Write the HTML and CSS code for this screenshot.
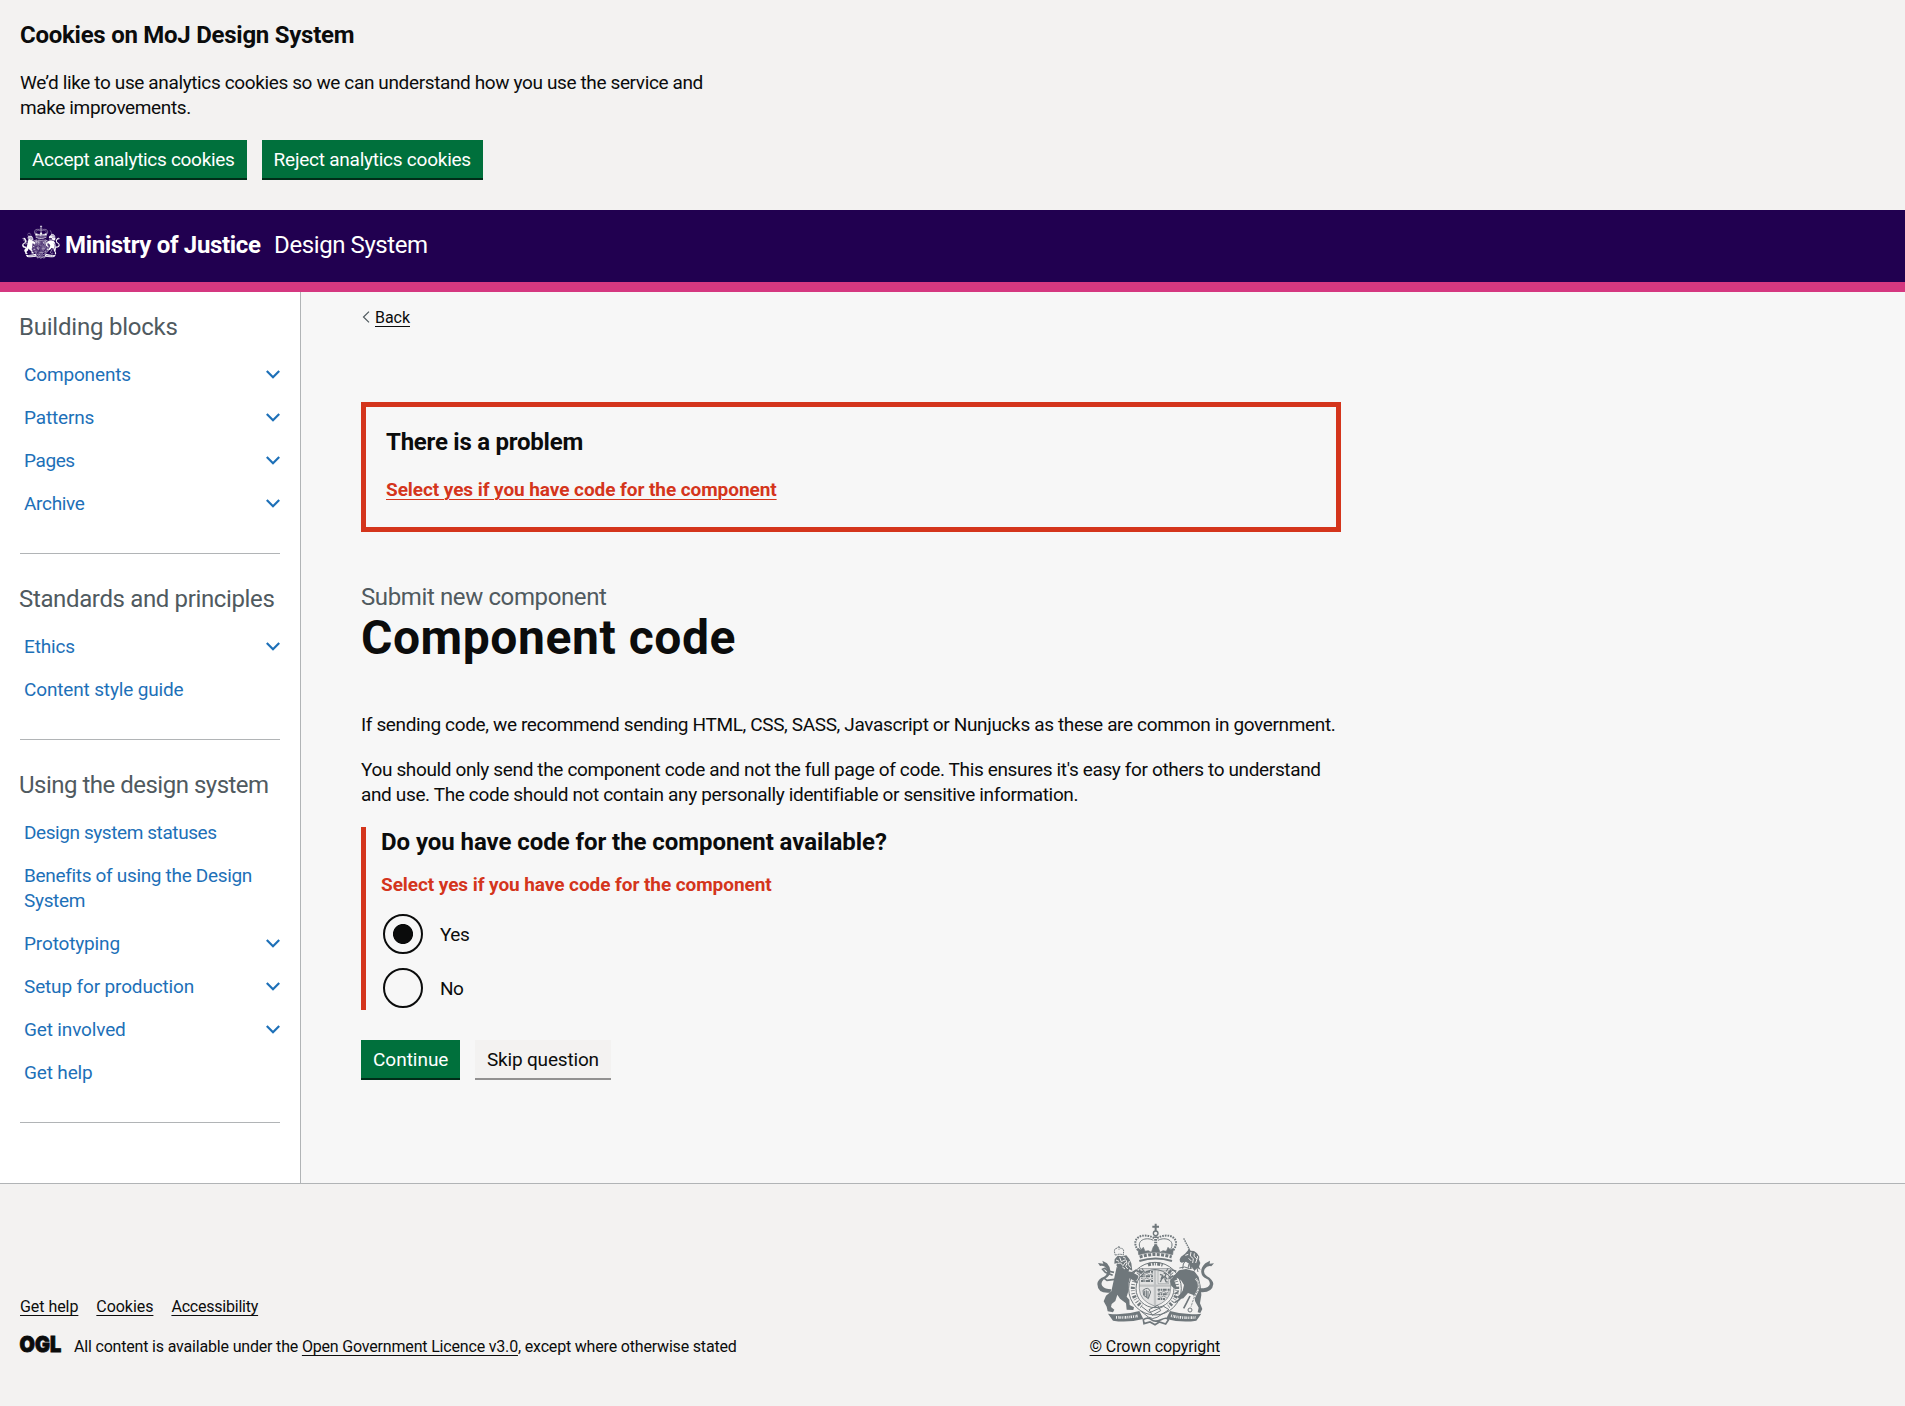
FILE: index.html
```html
<!DOCTYPE html>
<html lang="en">
<head>
<meta charset="utf-8">
<title>Component code - MoJ Design System</title>
<link rel="stylesheet" href="styles.css">
</head>
<body>
<svg class="sprite" aria-hidden="true">
  <symbol id="chevron" viewBox="0 0 14 9"><path d="M.8 1 7 7.2 13.2 1" fill="none" stroke="currentColor" stroke-width="2.2"/></symbol>
  <symbol id="crest" viewBox="51 40 351 309">
    <g fill="none" stroke="currentColor" stroke-width="3">
      <!-- crown -->
      <path d="M227 42v22M217 51h20" stroke-width="6"/>
      <circle cx="227" cy="71" r="7" stroke-width="4"/>
      <path d="M174 122C148 84 190 66 224 86M280 122C306 84 264 66 230 86" stroke-width="6" stroke-dasharray="5 3"/>
      <path d="M183 120C165 92 199 80 220 92M271 120C289 92 255 80 234 92"/>
      <path d="M227 80v30" stroke-width="9" stroke-dasharray="5 3"/>
      <path d="M176 135l-2-19 8 5 8-8 5 12 10-2 9 5 6-17 7-6 7 6 6 17 9-5 10 2 5-12 8 8 8-5-2 19q-51-14-102 0z" fill="currentColor" stroke-width="2"/>
      <path d="M179 142q48-15 96 0" stroke-width="9" stroke-dasharray="9 4"/>
      <path d="M178 154q49-15 98 0" stroke-width="6"/>
      <!-- garter -->
      <circle cx="225" cy="237" r="79"/>
      <circle cx="225" cy="237" r="57"/>
      <path d="M190 180A67 67 0 0 0 186 291M260 180A67 67 0 0 1 264 291" stroke-width="12" stroke-dasharray="3 5 7 4 2 6"/>
      <path d="M204 166q21-7 44 0" stroke-width="10" stroke-dasharray="9 4 5 3 3 4"/>
      <!-- shield -->
      <path d="M178 177h94v60q0 36-47 53q-47-17-47-53z" stroke-width="2" fill="currentColor" fill-opacity=".12"/>
      <path d="M225 178v110M178 228h94" stroke-width="7" stroke-opacity=".3"/>
      <path d="M183 186h36M183 200h36M183 214h36M233 240h36M233 254h32M233 268h22" stroke-width="6" stroke-dasharray="8 2 3 2 12 3"/>
      <path d="M183 192l9 3 8-4 9 5 10-4M183 206l9 3 8-4 9 5 10-4M234 246l9 3 8-4 9 5 7-4M234 260l9 3 8-4 9 5" stroke-width="2"/>
      <path d="M234 183h32v39h-32z" stroke-width="3" stroke-opacity=".4"/>
      <path d="M240 194l8 3-3 7 7-3 7 4M251 190l7 3-3 8 7 8M252 202l-7 6-4 9M254 206l4 10 5 1" stroke-width="4"/>
      <path d="M189 242q16-14 23 5l-7 20-14-10zM194 243v15M199 242v20M204 244v21" stroke-width="3"/>
      <!-- buckle -->
      <path d="M184 290l25 19 42-19 16 10-36 23q-13 8-26-1l-24-19M207 300l26-13 9 16-25 14z"/>
      <path d="M190 330q14-9 24 0t29 0 22 1l-8 12-19-6-13 8-15-8-18 5z" stroke-width="5"/>
      <!-- lion -->
      <path d="M106 137l-3-12q1-10 8-9 5-9 10 0 9-1 10 8l-1 12q-12-5-24 1M117 110v10" stroke-width="3" stroke-dasharray="5 2"/>
      <path d="M104 149l9-11 13 2 13-3 9 11 6 13 3 22-9-4-5 13-9-9-8 9-4-14-9-3-4-9 4-6-10 2z" fill="currentColor" stroke="none"/>
      <path d="M108 151l9 4M119 143l5 13 13-6M113 161l9-1 7 8 8-11M138 151l3 10-4 9 6 8M148 154l-3 11 7 9M127 172l8 6M129 142l8 4" class="knockout"/>
      <path d="M110 172l14 5 15 7 17 3 19 11-2 10-10 6-14-8-3 14-1 25-5 16 8 9 1 16 13 7-2 8-20-1-2-19-18-14-8-12-6 19-11 9-2 9 10 8-4 8-16-3-3-14-9-16 7-17 16-13 4-18z" fill="currentColor" stroke="none"/>
      <path d="M98 197L76 188l-8-9 7-3 9 8 18 4M104 209l-23 3-11-8M155 190l13-8 9 5M163 213l9 6" stroke-width="5"/>
      <path d="M91 249q-38 4-39-26 1-15 20-22 13-7 8-23-7-12-20-9l-6-9 16 2-3-9 14 8q16 18 7 35-4 8-18 14-9 10-3 19 8 10 27 10z" fill="currentColor" stroke="none"/>
      <!-- unicorn -->
      <path d="M311 86l17 33" stroke-width="4" stroke-dasharray="5 2"/>
      <path d="M299 149l4-8 12-9 8-9 4-8 5 8 10 1 9 7 7 10-1 9 4 10-4 11 5 10-10-6-9 9-7-13-5 8-4-17-9-6-13 3-5-3z" fill="currentColor" stroke="none"/>
      <path d="M316 137l9-3M333 127l-2 12 9 8-2 13M343 131l-1 9 9 8-4 12M326 146l8 8M352 139l1 8" class="knockout"/>
      <path d="M318 151l-8 12-2 14M327 163l-3 12M350 171l4 16M298 175l16-3 14 5 12-3" stroke-width="3"/>
      <path d="M284 196l13-14 21-4 25 7 13 17 6 27 2 27-4 25 7 17-6 12-8-2 3-14-10-18-6-20-16-6-14 16-12 3-6-8 9-8 7-10 4-17-9-14-13-8-8 7 8 21-2 8-14-11-4-15z" fill="currentColor" stroke="none"/>
      <path d="M313 249l-15 21-14 9M330 259l-10 20-9 17M280 198l-14 9M289 185l-15-5M296 245l-12 8" stroke-width="5"/>
      <path d="M358 247q39 4 42-24-2-14-19-23-13-8-7-22 8-11 20-8l8-9-13 1 1-9-14 8q-18 17-10 35 4 8 19 14 8 11 2 18-7 9-29 8z" fill="currentColor" stroke="none"/>
      <path d="M347 207q14 14 7 34-13 22-21 51" stroke-width="5" class="knockout"/>
      <path d="M347 207q14 14 7 34-13 22-21 51" stroke-dasharray="7 3" stroke-width="2.5"/>
      <circle cx="330" cy="301" r="6"/>
      <!-- ribbons -->
      <path d="M84 312q47 6 94-8l12 24q-48 12-91 5z" fill="currentColor" stroke="none"/>
      <path d="M364 312q-47 6-94-8l-12 24q48 12 91 5z" fill="currentColor" stroke="none"/>
      <path d="M108 323q35 2 67-5M273 318q34 9 75 5" class="knockout" stroke-width="8" stroke-dasharray="3 3 2 2 4 3"/>
    </g>
  </symbol>
</svg>

<section class="cookie-banner" aria-label="Cookies on MoJ Design System">
  <h2 class="heading-m cookie-banner__title">Cookies on MoJ Design System</h2>
  <p class="cookie-banner__text">We’d like to use analytics cookies so we can understand how you use the service and make improvements.</p>
  <div class="button-group">
    <button class="button button--accept" type="button">Accept analytics cookies</button>
    <button class="button button--reject" type="button">Reject analytics cookies</button>
  </div>
</section>

<header class="header">
  <svg class="header__crest" aria-hidden="true"><use href="#crest"/></svg>
  <span class="header__org">Ministry of Justice</span>
  <span class="header__service">Design System</span>
</header>

<div class="layout">
  <nav class="sidebar">
    <section class="nav-section">
      <h2 class="nav-section__title nav-section__title--loose">Building blocks</h2>
      <ul class="nav-list">
        <li><a class="loose" href="#">Components</a><svg><use href="#chevron"/></svg></li>
        <li><a class="loose" href="#">Patterns</a><svg><use href="#chevron"/></svg></li>
        <li><a class="tight" href="#">Pages</a><svg><use href="#chevron"/></svg></li>
        <li><a href="#">Archive</a><svg><use href="#chevron"/></svg></li>
      </ul>
    </section>
    <section class="nav-section">
      <h2 class="nav-section__title">Standards and principles</h2>
      <ul class="nav-list">
        <li><a class="loose" href="#">Ethics</a><svg><use href="#chevron"/></svg></li>
        <li><a class="loose" href="#">Content style guide</a></li>
      </ul>
    </section>
    <section class="nav-section">
      <h2 class="nav-section__title nav-section__title--tight">Using the design system</h2>
      <ul class="nav-list">
        <li><a class="tight" href="#">Design system statuses</a></li>
        <li><a href="#">Benefits of using the Design System</a></li>
        <li><a class="loose" href="#">Prototyping</a><svg><use href="#chevron"/></svg></li>
        <li><a class="loose" href="#">Setup for production</a><svg><use href="#chevron"/></svg></li>
        <li><a class="loose" href="#">Get involved</a><svg><use href="#chevron"/></svg></li>
        <li><a class="loose" href="#">Get help</a></li>
      </ul>
    </section>
  </nav>

  <main class="main">
    <a class="back-link" href="#"><svg viewBox="0 0 8 12"><path d="M7 .6 1.5 6 7 11.4" fill="none" stroke="#505a5f" stroke-width="1.2"/></svg><span>Back</span></a>

    <div class="error-summary">
      <h2 class="heading-m">There is a problem</h2>
      <a href="#code-yes">Select yes if you have code for the component</a>
    </div>

    <span class="caption">Submit new component</span>
    <h1 class="heading-xl">Component code</h1>

    <p class="body">If sending code, we recommend sending HTML, CSS, SASS, Javascript or Nunjucks as these are common in government.</p>
    <p class="body">You should only send the component code and not the full page of code. This ensures it's easy for others to understand and use. The code should not contain any personally identifiable or sensitive information.</p>

    <form>
      <div class="form-group">
        <fieldset>
          <legend class="heading-m heading-m--legend">Do you have code for the component available?</legend>
          <p class="error-message">Select yes if you have code for the component</p>
          <div class="radios">
            <label class="radio"><input id="code-yes" type="radio" name="code" checked><span>Yes</span></label>
            <label class="radio"><input type="radio" name="code"><span>No</span></label>
          </div>
        </fieldset>
      </div>
      <div class="button-group button-group--form">
        <button class="button" type="button">Continue</button>
        <button class="button button--secondary" type="button">Skip question</button>
      </div>
    </form>
  </main>
</div>

<footer class="footer">
  <div class="footer__meta">
    <div>
      <ul class="footer__links">
        <li><a href="#">Get help</a></li>
        <li><a href="#">Cookies</a></li>
        <li><a href="#">Accessibility</a></li>
      </ul>
      <div class="licence">
        <svg class="licence__logo" viewBox="0 0 41 17"><text x="-.4" y="16.2" textLength="41.6" lengthAdjust="spacingAndGlyphs">OGL</text></svg>
        <span>All content is available under the <a href="#">Open Government Licence v3.0</a>, except where otherwise stated</span>
      </div>
    </div>
    <div class="copyright">
      <svg class="copyright__crest" aria-hidden="true"><use href="#crest"/></svg>
      <a href="#">© Crown copyright</a>
    </div>
  </div>
</footer>
</body>
</html>
```
FILE: styles.css
```css
* { box-sizing: border-box; }
body {
  --backdrop: #f3f2f1;
  margin: 0;
  min-height: 1406px;
  background: #f3f2f1;
  color: #0b0c0c;
  font: 19px/25px Roboto, "Liberation Sans", sans-serif;
  letter-spacing: -0.3px;
}
h1, h2, p, ul, fieldset { margin: 0; padding: 0; border: 0; }
ul { list-style: none; }
a { color: inherit; text-underline-offset: .1578em; text-decoration-thickness: 1px; }
.sprite { display: none; }
.knockout { stroke: var(--backdrop); }

.heading-m { font-size: 24px; line-height: 30px; font-weight: 700; letter-spacing: -0.24px; }
.heading-m--legend { padding: 0; letter-spacing: -0.06px; }
.heading-xl { margin: 1px 0 49px; font-size: 48px; line-height: 50px; font-weight: 700; letter-spacing: .56px; }
.caption { display: block; color: #505a5f; font-size: 24px; line-height: 30px; letter-spacing: -0.38px; }

.button-group { display: flex; gap: 15px; }
.button-group--form { gap: 14.5px; }
.button {
  height: 38px;
  padding: 8px 10px 7px;
  border: 2px solid transparent;
  background: #00703c;
  box-shadow: 0 2px 0 #002d18;
  color: #fff;
  font: inherit;
  line-height: 19px;
  letter-spacing: -0.02px;
}
.button--accept { letter-spacing: -0.3px; }
.button--reject { letter-spacing: -0.24px; }
.button--secondary { background: #f3f2f1; box-shadow: 0 2px 0 #929191; color: #0b0c0c; letter-spacing: -0.17px; }

.cookie-banner { height: 210px; padding: 20px; }
.cookie-banner__title { letter-spacing: -0.26px; }
.cookie-banner__text { width: 720px; margin: 20px 0; letter-spacing: -0.373px; }

.header {
  --backdrop: #210050;
  display: flex;
  height: 82px;
  padding: 15px 20px 0 22px;
  background: #210050;
  border-bottom: 10px solid #d53880;
  color: #fff;
  font-size: 24px;
  line-height: 30px;
}
.header__crest { width: 38px; height: 34px; margin-right: 5px; }
.header__org { margin: 5px 13.5px 0 0; font-weight: 700; letter-spacing: -0.33px; }
.header__service { margin-top: 5px; letter-spacing: -0.42px; }

.layout { display: flex; height: 891px; background: #f7f7f7; }
.sidebar { width: 301px; padding: 20px 20px 0; background: #fff; border-right: 1px solid #b1b4b6; }
.nav-section { margin-bottom: 30px; padding-bottom: 28px; border-bottom: 1px solid #b1b4b6; }
.nav-section__title { margin-left: -1px; color: #505a5f; font-size: 24px; line-height: 30px; font-weight: 400; letter-spacing: -0.36px; white-space: nowrap; }
.nav-section__title--loose { letter-spacing: -0.22px; }
.nav-section__title--tight { letter-spacing: -0.5px; }
.nav-list { margin-top: 11px; color: #1d70b8; letter-spacing: -0.32px; }
.nav-list li { display: flex; justify-content: space-between; padding: 9px 0 9px 4px; }
.nav-list a { text-decoration: none; }
.nav-list .tight { letter-spacing: -0.42px; }
.nav-list .loose { letter-spacing: -0.15px; }
.nav-list svg { flex: none; width: 14px; height: 9px; margin-top: 8px; }

.main { width: 1040px; padding: 16px 0 0 60px; }
.back-link { display: flex; align-items: center; gap: 5px; font-size: 16px; line-height: 20px; letter-spacing: -0.04px; text-decoration: none; }
.back-link svg { width: 8px; height: 12px; margin: -2px 0 0 1px; }
.back-link span { text-decoration: underline; text-decoration-thickness: 1px; text-underline-offset: .1578em; }

.error-summary { margin: 74px 0 50px; padding: 20px 20px 25px; border: 5px solid #d4351c; }
.error-summary a { display: block; margin-top: 20px; }
.error-summary a, .error-message { color: #d4351c; font-weight: 700; letter-spacing: -0.07px; }
.body { margin-bottom: 20px; letter-spacing: -0.36px; }

.form-group { margin-bottom: 30px; padding-left: 15px; border-left: 5px solid #d4351c; }
.error-message { margin: 15px 0; }
.radios { display: grid; gap: 10px; }
.radio { display: flex; align-items: center; gap: 17px; height: 44px; padding-left: 2px; letter-spacing: -0.5px; }
.radio input {
  appearance: none;
  width: 40px;
  height: 40px;
  margin: 0;
  border: 2px solid #0b0c0c;
  border-radius: 50%;
}
.radio input:checked { background: radial-gradient(circle, #0b0c0c 9.6px, transparent 10.4px); }

.footer { height: 223px; padding-top: 39px; border-top: 1px solid #b1b4b6; font-size: 16px; line-height: 20px; letter-spacing: -0.2px; }
.footer__meta { display: flex; align-items: flex-end; justify-content: space-between; width: 1200px; height: 134px; margin-left: 20px; }
.footer__links { display: flex; gap: 18px; margin-bottom: 20px; letter-spacing: -0.05px; }
.footer__links li:last-child { letter-spacing: -0.22px; }
.licence { display: flex; gap: 13px; height: 20px; letter-spacing: -0.18px; }
.licence__logo { width: 41px; height: 17px; margin-top: -1px; overflow: visible; font: 900 21.5px Inter, sans-serif; letter-spacing: 0; }
.licence__logo text { fill: #0b0c0c; stroke: #0b0c0c; stroke-width: .9px; }
.copyright { display: flex; flex-direction: column; align-items: center; gap: 11px; letter-spacing: -0.12px; }
.copyright__crest { width: 117px; height: 103px; margin-left: 1px; color: #6f777b; }
```
